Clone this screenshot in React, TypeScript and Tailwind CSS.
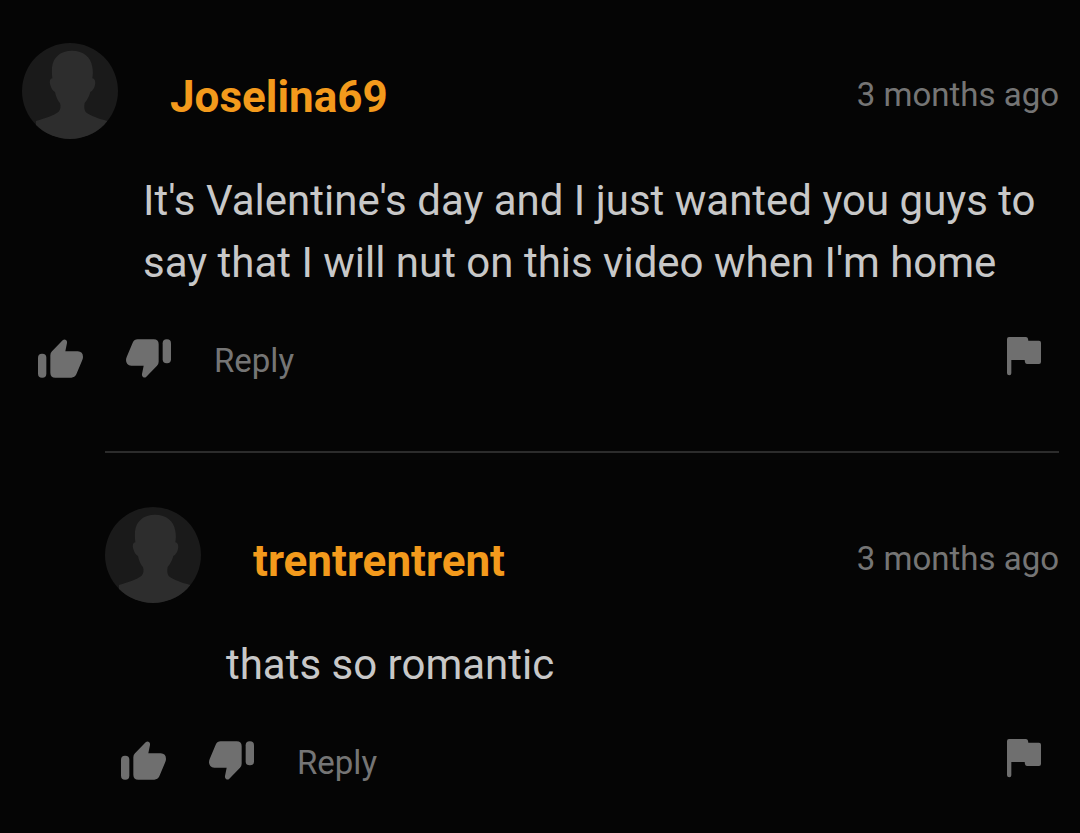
type Entry = { author: string; age: string; text: string };

const comment: Entry = {
  author: "Joselina69",
  age: "3 months ago",
  text: "It's Valentine's day and I just wanted you guys to say that I will nut on this video when I'm home",
};

const reply: Entry = {
  author: "trentrentrent",
  age: "3 months ago",
  text: "thats so romantic",
};

function Avatar() {
  return (
    <svg viewBox="0 0 288 288" className="size-24 shrink-0 rounded-full bg-[#1a1a1a]" aria-hidden="true">
      <path
        d="M150 23 C116 23 93 42 90 74 C89 86 90 97 91 106 C83 107 82 116 85 126 C88 137 93 144 99 147 C102 163 108 173 114 181 C117 190 116 199 110 206 C94 219 62 227 42 234 L42 288 H256 V234 C230 227 206 219 191 207 C186 200 186 190 188 180 C196 170 202 160 205 147 C213 143 217 135 219 126 C221 116 219 108 211 106 C213 96 213 84 211 72 C207 42 184 23 150 23 Z"
        fill="#2d2d2d"
      />
    </svg>
  );
}

function Thumb({ down = false }: { down?: boolean }) {
  return (
    <svg
      viewBox="0 0 135 117"
      className={down ? "h-[39px] w-[45px] rotate-180" : "h-[39px] w-[45px]"}
      fill="currentColor"
      aria-hidden="true"
    >
      <rect x="0" y="44" width="25" height="72" rx="12" />
      <path d="M37 49 Q37 42 42 37 L74 4 Q79 -1 84 3 Q88 6 87 12 L82 37 H119 Q135 38 135 54 Q135 59 132 65 L115 106 Q110 116 100 116 H52 Q37 116 37 101 Z" />
    </svg>
  );
}

function Flag() {
  return (
    <svg viewBox="0 0 102 117" className="h-[39px] w-[34px]" fill="currentColor" aria-hidden="true">
      <path d="M6 0 H57 Q62 0 63 5 L64 11 H96 Q102 11 102 17 V75 Q102 81 96 81 H60 Q55 81 54 76 L53 69 H13 V109 Q13 115 7 115 Q0 115 0 109 V6 Q0 0 6 0 Z" />
    </svg>
  );
}

function Comment({ entry }: { entry: Entry }) {
  return (
    <article>
      <header className="flex items-center">
        <Avatar />
        <a href="#" className="ml-[52px] pt-[11px] text-[44px] leading-[52px] font-bold text-[#f39a1c]">
          {entry.author}
        </a>
        <time className="ml-auto pt-2 text-[33px] leading-10 text-[#757575]">{entry.age}</time>
      </header>
      <p className="mt-[31px] pl-[121px] text-[42px] leading-[62px] text-[#c8c8c8]">{entry.text}</p>
      <footer className="mt-10 flex h-12 items-center pr-[18px] pl-4 text-[#6f6f6f]">
        <button type="button" aria-label="Like">
          <Thumb />
        </button>
        <button type="button" aria-label="Dislike" className="ml-[43px]">
          <Thumb down />
        </button>
        <button type="button" className="ml-[43px] pt-[6px] text-[33px] leading-10 text-[#757575]">
          Reply
        </button>
        <button type="button" aria-label="Report" className="ml-auto pb-1">
          <Flag />
        </button>
      </footer>
    </article>
  );
}

export default function App() {
  return (
    <main className="min-h-screen bg-[#050505] pt-[43px] pr-[21px] pb-10 pl-[22px] font-['Roboto',sans-serif]">
      <Comment entry={comment} />
      <section className="mt-[69px] ml-[83px] border-t-2 border-[#2c2c2c] pt-[54px]">
        <Comment entry={reply} />
      </section>
    </main>
  );
}
